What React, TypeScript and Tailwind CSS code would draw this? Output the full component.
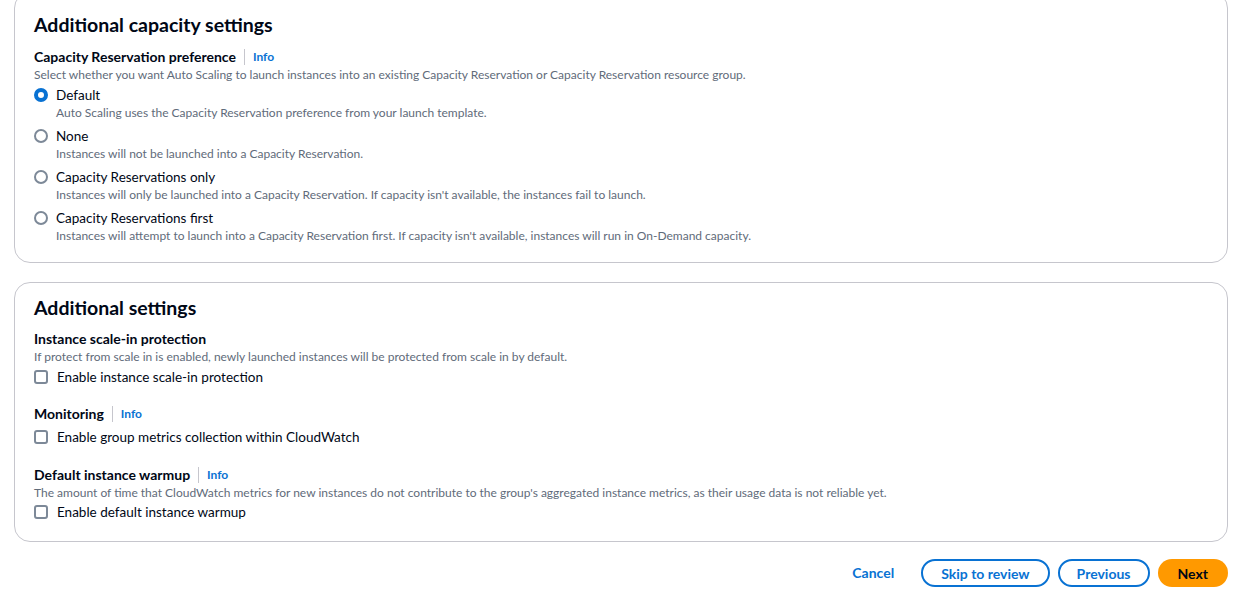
import React from "react";

const font = { fontFamily: 'Lato, "Open Sans", Arial, sans-serif' };

function Info() {
  return (
    <span className="ml-2 inline-flex items-center">
      <span className="mr-2 h-4 w-px bg-[#c6c6cd]" />
      <a className="text-[12px] font-bold text-[#0972d3]">Info</a>
    </span>
  );
}

function Radio({ checked, label, desc }: { checked?: boolean; label: string; desc: string }) {
  return (
    <div className="flex items-start">
      <div className="flex h-[20px] w-[22px] shrink-0 items-center">
        {checked ? (
          <span className="h-[14px] w-[14px] rounded-full border-[4px] border-[#0972d3] bg-white" />
        ) : (
          <span className="h-[14px] w-[14px] rounded-full border-2 border-[#7d8998] bg-white" />
        )}
      </div>
      <div>
        <div className="text-[13.5px] leading-[20px] text-[#000716]">{label}</div>
        <div className="text-[12px] leading-[16px] text-[#5f6b7a]">{desc}</div>
      </div>
    </div>
  );
}

function Check({ label }: { label: string }) {
  return (
    <label className="flex items-center">
      <span className="mr-[9px] h-[14px] w-[14px] rounded-[3px] border-2 border-[#7d8998] bg-white" />
      <span className="text-[13.5px] leading-[20px] text-[#000716]">{label}</span>
    </label>
  );
}

export default function App() {
  return (
    <div style={font} className="h-[602px] overflow-hidden bg-white pl-[14px] pr-[13px]">
      <div className="-mt-2 flex flex-col">
        {/* Additional capacity settings */}
        <section className="mb-[19px] rounded-2xl border border-[#c6c6cd] px-[19px] pb-[18px] pt-5">
          <h2 className="text-[19.5px] font-bold leading-[24px] text-[#000716]">
            Additional capacity settings
          </h2>
          <div className="mt-[10px] flex items-center text-[14px] font-bold leading-[20px] text-[#000716]">
            Capacity Reservation preference
            <Info />
          </div>
          <p className="text-[12px] leading-[16px] text-[#5f6b7a]">
            Select whether you want Auto Scaling to launch instances into an existing Capacity Reservation or Capacity
            Reservation resource group.
          </p>
          <div className="mt-[2px] flex flex-col gap-[5px]">
            <Radio
              checked
              label="Default"
              desc="Auto Scaling uses the Capacity Reservation preference from your launch template."
            />
            <Radio label="None" desc="Instances will not be launched into a Capacity Reservation." />
            <Radio
              label="Capacity Reservations only"
              desc="Instances will only be launched into a Capacity Reservation. If capacity isn't available, the instances fail to launch."
            />
            <Radio
              label="Capacity Reservations first"
              desc="Instances will attempt to launch into a Capacity Reservation first. If capacity isn't available, instances will run in On-Demand capacity."
            />
          </div>
        </section>

        {/* Additional settings */}
        <section className="mb-[17px] rounded-2xl border border-[#c6c6cd] px-[19px] pb-[19px] pt-[13px]">
          <h2 className="text-[19.5px] font-bold leading-[24px] text-[#000716]">Additional settings</h2>
          <div className="mt-[9px] text-[14px] font-bold leading-[20px] text-[#000716]">
            Instance scale-in protection
          </div>
          <p className="text-[12px] leading-[16px] text-[#5f6b7a]">
            If protect from scale in is enabled, newly launched instances will be protected from scale in by default.
          </p>
          <div className="mt-[2px]">
            <Check label="Enable instance scale-in protection" />
          </div>

          <div className="mt-[17px] flex items-center text-[14px] font-bold leading-[20px] text-[#000716]">
            Monitoring
            <Info />
          </div>
          <div className="mt-[3px]">
            <Check label="Enable group metrics collection within CloudWatch" />
          </div>

          <div className="mt-[18px] flex items-center text-[14px] font-bold leading-[20px] text-[#000716]">
            Default instance warmup
            <Info />
          </div>
          <p className="text-[12px] leading-[16px] text-[#5f6b7a]">
            The amount of time that CloudWatch metrics for new instances do not contribute to the group's aggregated
            instance metrics, as their usage data is not reliable yet.
          </p>
          <div className="mt-px">
            <Check label="Enable default instance warmup" />
          </div>
        </section>

        {/* Footer actions */}
        <div className="flex items-center justify-end gap-2">
          <button className="mr-[3px] px-4 text-[14px] font-bold leading-[20px] text-[#0972d3]">Cancel</button>
          <button className="h-[28px] rounded-full border-2 border-[#0972d3] px-[18px] text-[14px] font-bold text-[#0972d3]">
            Skip to review
          </button>
          <button className="h-[28px] rounded-full border-2 border-[#0972d3] px-[17px] text-[14px] font-bold text-[#0972d3]">
            Previous
          </button>
          <button className="h-[28px] rounded-full bg-[#ff9900] px-5 text-[14px] font-bold text-[#000716]">
            Next
          </button>
        </div>
      </div>
    </div>
  );
}
